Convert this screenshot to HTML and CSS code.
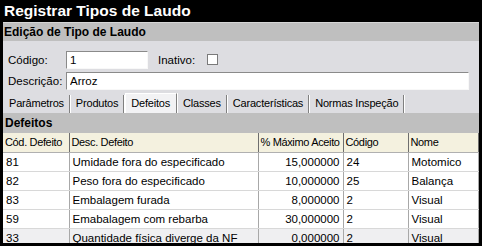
FILE: index.html
```html
<!DOCTYPE html>
<html lang="pt-BR">
  <head>
    <meta charset="UTF-8" />
    <title>Registrar Tipos de Laudo</title>
    <link rel="stylesheet" href="styles.css">
  </head>
  <body>
    <div class="window">
      <div class="titlebar">Registrar Tipos de Laudo</div>

      <div class="panel">
        <div class="panel-head">Edição de Tipo de Laudo</div>

        <div class="form">
          <div class="form-row">
            <label class="label">Código:</label>
            <input class="input input-code" type="text" value="1" />
            <label class="label label-inline">Inativo:</label>
            <span class="checkbox"></span>
          </div>
          <div class="form-row">
            <label class="label">Descrição:</label>
            <input class="input input-desc" type="text" value="Arroz" />
          </div>
        </div>

        <div class="tabs">
          <span class="tab">Parâmetros</span>
          <span class="tab">Produtos</span>
          <span class="tab tab-active">Defeitos</span>
          <span class="tab">Classes</span>
          <span class="tab">Características</span>
          <span class="tab">Normas Inspeção</span>
        </div>

        <div class="section-head">Defeitos</div>

        <table class="grid">
          <colgroup>
            <col class="c1" />
            <col class="c2" />
            <col class="c3" />
            <col class="c4" />
            <col class="c5" />
          </colgroup>
          <thead>
            <tr>
              <th>Cód. Defeito</th>
              <th>Desc. Defeito</th>
              <th>% Máximo Aceito</th>
              <th>Código</th>
              <th>Nome</th>
            </tr>
          </thead>
          <tbody>
            <tr>
              <td>81</td>
              <td>Umidade fora do especificado</td>
              <td class="num">15,000000</td>
              <td>24</td>
              <td>Motomico</td>
            </tr>
            <tr>
              <td>82</td>
              <td>Peso fora do especificado</td>
              <td class="num">10,000000</td>
              <td>25</td>
              <td>Balança</td>
            </tr>
            <tr>
              <td>83</td>
              <td>Embalagem furada</td>
              <td class="num">8,000000</td>
              <td>2</td>
              <td>Visual</td>
            </tr>
            <tr>
              <td>59</td>
              <td>Emabalagem com rebarba</td>
              <td class="num">30,000000</td>
              <td>2</td>
              <td>Visual</td>
            </tr>
            <tr class="row-current">
              <td>33</td>
              <td>Quantidade física diverge da NF</td>
              <td class="num">0,000000</td>
              <td>2</td>
              <td>Visual</td>
            </tr>
          </tbody>
        </table>
      </div>
    </div>
  </body>
</html>
```

FILE: styles.css
```css
* {
  margin: 0;
  padding: 0;
  box-sizing: border-box;
}

body {
  background-color: #000;
  font-family: "Liberation Sans", Arial, sans-serif;
  font-size: 11.5px;
  color: #000;
}

.window {
  width: 482px;
  height: 246px;
  overflow: hidden;
  background-color: #000;
}

.titlebar {
  height: 22px;
  padding-left: 4px;
  line-height: 21px;
  color: #fff;
  font-size: 15.5px;
  font-weight: bold;
}

.panel {
  margin: 0 3px 0 3px;
  height: 221px;
  overflow: hidden;
  background-color: #dddde1;
}

.panel-head {
  height: 19px;
  padding-left: 1px;
  line-height: 18px;
  background-color: #bfbfbf;
  border-top: 1px solid #d6d6d6;
  font-weight: bold;
  font-size: 12px;
}

.form {
  padding: 8px 0 0 5px;
  height: 50px;
}

.form-row {
  display: flex;
  align-items: center;
  height: 21px;
}

.label {
  width: 58px;
}

.label-inline {
  width: auto;
  margin-left: 10px;
  margin-right: 12px;
}

.input {
  height: 18px;
  padding: 0 3px;
  border: 1px solid #f8f8f8;
  border-top-color: #8a8a8a;
  border-left-color: #8a8a8a;
  background-color: #fff;
  font-family: inherit;
  font-size: 11.5px;
  outline: none;
}

.input-code {
  width: 82px;
}

.input-desc {
  width: 403px;
}

.checkbox {
  width: 11px;
  height: 11px;
  border: 1px solid #7a7a7a;
  background-color: #fff;
}

.tabs {
  display: flex;
  align-items: flex-end;
  height: 22px;
  padding-left: 1px;
  font-size: 11px;
  letter-spacing: -0.2px;
}

.tab {
  height: 18px;
  line-height: 17px;
  padding: 0 5px 0 5px;
  border-right: 1px solid #808080;
  box-shadow: 1px 0 0 #fff;
  margin-right: 1px;
}

.tab-active {
  height: 20px;
  line-height: 18px;
  background-color: #f2f2f4;
  border-left: 1px solid #fff;
  border-top: 1px solid #fff;
  padding: 0 6px 0 5px;
}

.section-head {
  height: 20px;
  padding-left: 2px;
  line-height: 20px;
  background-color: #bfbfbf;
  font-weight: bold;
  font-size: 12px;
}

.grid {
  width: 100%;
  border-collapse: collapse;
  table-layout: fixed;
  background-color: #fff;
}

.c1 { width: 66px; }
.c2 { width: 189px; }
.c3 { width: 85px; }
.c4 { width: 65px; }

.grid th,
.grid td {
  height: 19px;
  padding: 0 3px;
  text-align: left;
  font-weight: normal;
  white-space: nowrap;
  overflow: hidden;
  border-bottom: 1px solid #d8d8d8;
  border-right: 1px solid #a8a8a8;
}

.grid th {
  padding: 0 2px;
  font-size: 11px;
  letter-spacing: -0.35px;
  background-color: #f4f1df;
  border-right: 1px solid #6e6e6e;
  border-bottom: 1px solid #b0b0b0;
}

.grid td.num {
  text-align: right;
}

.row-current td {
  background-color: #efeff1;
}
```
